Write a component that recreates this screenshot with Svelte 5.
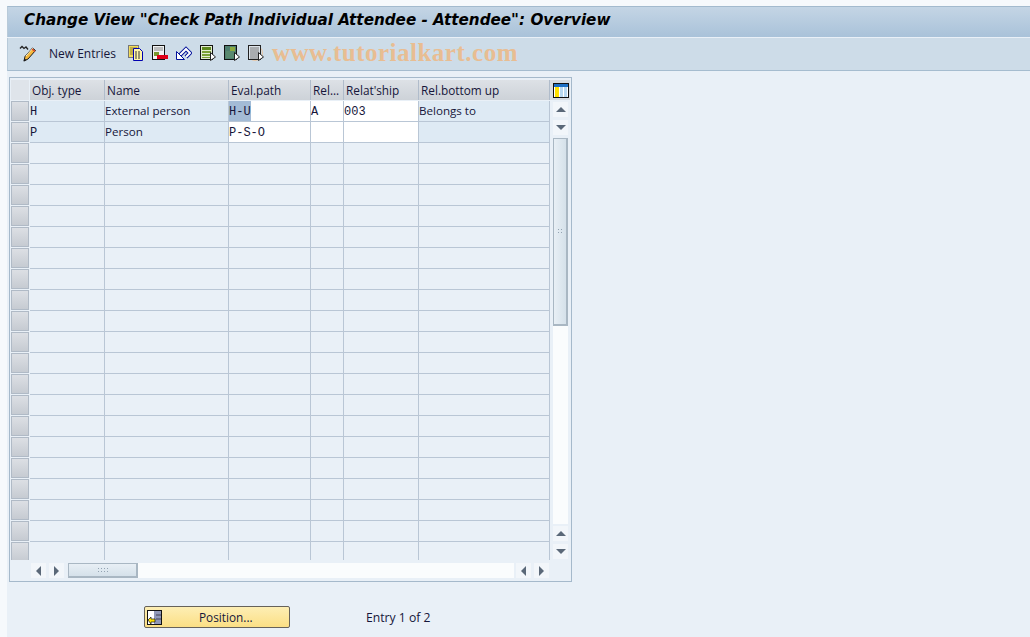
<script>
  const cols = [
    { name: 'Obj. type', w: 75 },
    { name: 'Name', w: 124 },
    { name: 'Eval.path', w: 82 },
    { name: 'Rel...', w: 33 },
    { name: "Relat'ship", w: 75 },
    { name: 'Rel.bottom up', w: 131 }
  ];
  const data = [
    [['H', 'mono'], ['External person', ''], ['H-U', 'mono input sel'], ['A', 'mono input'], ['003', 'mono input'], ['Belongs to', '']],
    [['P', 'mono'], ['Person', ''], ['P-S-O', 'mono input'], ['', 'input'], ['', 'input'], ['', '']]
  ];
  const empty = Array.from({ length: 20 }, () => 0);
</script>

<div class="page">
  <div class="shell">
    <header class="title">Change View "Check Path Individual Attendee - Attendee": Overview</header>
    <nav class="toolbar">
      <svg class="pen" width="18" height="17" viewBox="0 0 18 17">
        <path d="M1 3.500l2-2 2 2 2-1.500 2 2.500" fill="none" stroke="#222" stroke-width="1.300"/>
        <path d="M6 11.500L13.500 3l3 2.500L9 14l-4 2z" fill="#f5b83c" stroke="#1a1a1a"/>
        <path d="M7 11l7-8" stroke="#fff3c0"/>
        <path d="M13 4l3 2.500" stroke="#d8452a" stroke-width="1.500"/>
        <path d="M4.500 16.500l1-3 2 1.500z" fill="#1a1a1a"/>
      </svg>
      <span class="newent">New Entries</span>
      <div class="icons">
        <svg width="16" height="16" viewBox="0 0 16 16">
          <rect x="0.500" y="0.500" width="10" height="12" fill="#f3dc5c" stroke="#777"/>
          <path d="M2 3h7M2 5h7M2 7h7M2 9h7" stroke="#8a7f30"/>
          <path d="M5.500 3.500h6l3 3v9h-9z" fill="#fff6a8" stroke="#0000b0"/>
          <path d="M7 7h6M7 9h6M7 11h6M7 13h6" stroke="#333" stroke-dasharray="2 1"/>
        </svg>
        <svg width="16" height="16" viewBox="0 0 16 16">
          <rect x="0.500" y="0.500" width="12" height="14" fill="#f2f4f4" stroke="#111"/>
          <path d="M2 3h9M2 5h9" stroke="#8a8a8a"/>
          <rect x="2" y="7" width="5" height="4" fill="#7a9a30"/>
          <rect x="5" y="10" width="11" height="4" fill="#e00018"/>
        </svg>
        <svg width="16" height="16" viewBox="0 0 16 16">
          <path d="M4 10l6-6 4 4-4 4" fill="none" stroke="#00109a" stroke-width="4"/>
          <path d="M4 10l6-6 4 4-4 4" fill="none" stroke="#fff" stroke-width="2"/>
          <path d="M0.500 6.500v8h8z" fill="#fff" stroke="#00109a"/>
        </svg>
        <svg width="16" height="16" viewBox="0 0 16 16">
          <rect x="0.500" y="0.500" width="12" height="14" fill="#e4ecd0" stroke="#111"/>
          <rect x="2" y="2" width="9" height="3" fill="#5f8a20"/>
          <rect x="2" y="6" width="9" height="2" fill="#7ba034"/>
          <rect x="2" y="9" width="9" height="2" fill="#7ba034"/>
          <rect x="2" y="12" width="9" height="1" fill="#7ba034"/>
          <path d="M10.500 7.500l5 4.500-5 3.500z" fill="#fff" stroke="#222"/>
        </svg>
        <svg width="16" height="16" viewBox="0 0 16 16">
          <rect x="0.500" y="0.500" width="12" height="14" fill="#4f7f6f" stroke="#111"/>
          <rect x="6" y="2" width="5" height="4" fill="#8aaa40"/>
          <rect x="2" y="6" width="9" height="7" fill="#5a8a70"/>
          <path d="M10.500 7.500l5 4.500-5 3.500z" fill="#fff" stroke="#222"/>
        </svg>
        <svg width="16" height="16" viewBox="0 0 16 16">
          <circle cx="7" cy="8" r="7.500" fill="none" stroke="#e8c8a8"/>
          <rect x="0.500" y="0.500" width="12" height="14" fill="#dde4ea" stroke="#222"/>
          <path d="M2 3h9M2 5h9M2 7h9M2 9h9M2 11h9M2 13h9" stroke="#777"/>
          <path d="M10.500 7.500l5 4.500-5 3.500z" fill="#fff" stroke="#222"/>
        </svg>
      </div>
      <span class="mark">www.tutorialkart.com</span>
    </nav>

    <section class="frame">
      <div class="upper">
        <div class="tablewrap">
          <div class="hrow">
            <div class="corner"></div>
            {#each cols as c}
              <div class="hcell" style="width:{c.w}px">{c.name}</div>
            {/each}
          </div>
          {#each data as row}
            <div class="row">
              <div class="rh"><span></span></div>
              {#each row as cell, i}
                <div class="cell {cell[1]}" style="width:{cols[i].w}px">
                  {#if cell[1].includes('sel')}<span class="hl">{cell[0]}</span>{:else}{cell[0]}{/if}
                </div>
              {/each}
            </div>
          {/each}
          {#each empty as _}
            <div class="row">
              <div class="rh"><span></span></div>
              {#each cols as c}
                <div class="cell" style="width:{c.w}px"></div>
              {/each}
            </div>
          {/each}
        </div>
        <aside class="vside">
          <div class="config">
            <svg width="16" height="15" viewBox="0 0 16 15">
              <rect x="0.500" y="0.500" width="15" height="14" fill="#fff" stroke="#111"/>
              <rect x="1" y="1" width="14" height="3" fill="#1c6fc4"/>
              <rect x="2" y="4" width="4" height="10" fill="#ffe000"/>
              <rect x="7" y="4" width="3" height="10" fill="#b8d8f0"/>
              <rect x="11" y="4" width="3" height="10" fill="#b8d8f0"/>
            </svg>
          </div>
          <div class="sbtn first"><i class="up"></i></div>
          <div class="sbtn second"><i class="down"></i></div>
          <div class="vtrack">
            <div class="vthumb"><b></b></div>
          </div>
          <div class="sbtn"><i class="up"></i></div>
          <div class="sbtn second"><i class="down"></i></div>
        </aside>
      </div>
      <div class="hscroll">
        <div class="sbtn h"><i class="left"></i></div>
        <div class="sbtn h"><i class="right"></i></div>
        <div class="htrack"><div class="hthumb"><b></b></div></div>
        <div class="sbtn h"><i class="left"></i></div>
        <div class="sbtn h"><i class="right"></i></div>
      </div>
    </section>

    <footer class="foot">
      <button class="pos">
        <svg width="16" height="15" viewBox="0 0 16 15">
          <rect x="0.500" y="0.500" width="14" height="14" fill="#8f97b8" stroke="#111"/>
          <rect x="1" y="1" width="6" height="13" fill="#fff"/>
          <path d="M9 5h5M9 9h5" stroke="#445"/>
          <path d="M1 10l3-3v2h4v3H4v2z" fill="#ffe000" stroke="#111" stroke-width=".7"/>
        </svg>
        <span>Position...</span>
      </button>
      <span class="entry">Entry 1 of 2</span>
    </footer>
  </div>
</div>

<style>
  :global(body) { margin: 0; background: #f6f9fc; }
  .page {
    width: 1030px; height: 637px; box-sizing: border-box;
    padding: 6px 0 0 7px; overflow: hidden;
    font-family: "Open Sans", sans-serif; font-size: 12px; color: #16163a;
    display: flex; flex-direction: column;
  }
  .shell { flex: 1; display: flex; flex-direction: column; background: #e9f0f7; }
  .title {
    height: 31px; box-sizing: border-box; padding-left: 16px;
    background: linear-gradient(#c4d5e5, #a9c2d9);
    border-top: 1px solid #a3bace; border-left: 1px solid #b8cad9;
    font: italic bold 15.200px/27px "DejaVu Sans", sans-serif; color: #000;
    white-space: nowrap;
  }
  .toolbar {
    height: 33px; box-sizing: border-box; display: flex; align-items: center;
    padding: 0 0 2px 11px; margin-top: 1px;
    background: #cddce8; border-bottom: 1px solid #a5bccf; border-left: 1px solid #b8cad9;
  }
  .newent { margin-left: 12px; font-size: 12px; }
  .icons { display: flex; gap: 8px; margin-left: 12px; }
  .mark {
    margin-left: 8px; font: bold 25px "Liberation Serif", serif;
    color: #e8bd92; white-space: nowrap; letter-spacing: .5px;
  }
  .frame {
    margin: 6px 0 0 2px; width: 563px; height: 505px; box-sizing: border-box;
    border: 1px solid #a5b9cb; background: #e9f0f7;
    display: flex; flex-direction: column; padding: 1px 1px 0 1px;
  }
  .upper { display: flex; height: 481px; overflow: hidden; }
  .tablewrap { width: 539px; flex: none; overflow: hidden; }
  .hrow { display: flex; height: 21px; margin-top: 1px; }
  .corner { width: 19px; flex: none; box-sizing: border-box; background: #dfe4ea; border-right: 1px solid #e9f0f7; height: 20px; }
  .hcell {
    box-sizing: border-box; height: 20px; padding-left: 2px; line-height: 21px;
    background: linear-gradient(#dde1e6, #cdd2d8); border-right: 1px solid #b0bccb;
    font-size: 11.800px; white-space: nowrap; overflow: hidden;
  }
  .row { display: flex; height: 21px; }
  .rh { width: 19px; flex: none; box-sizing: border-box; padding-bottom: 1px; }
  .rh span {
    display: block; width: 18px; height: 20px; box-sizing: border-box;
    background: linear-gradient(#dcdfe4, #c6cbd2); border: 1px solid #b0bac6;
  }
  .cell {
    box-sizing: border-box; height: 21px; line-height: 20px; padding-left: 0;
    border-right: 1px solid #b9c6d5; border-bottom: 1px solid #b9c6d5;
    font-size: 11.600px; white-space: nowrap;
  }
  .row:nth-child(2) .cell:not(.input), .row:nth-child(3) .cell:not(.input) { background: #deeaf4; }
  .cell.input { background: #fff; }
  .cell.mono { font: 12px/22px "Liberation Mono", monospace; padding-left: 0; }
  .hl { background: #a3bbd6; display: inline-block; height: 20px; line-height: 22px; }
  .vside { width: 21px; flex: none; display: flex; flex-direction: column; align-items: center; padding-bottom: 1px; box-sizing: border-box; }
  .config {
    width: 21px; height: 20px; margin-top: 1px; flex: none; box-sizing: border-box; display: flex; align-items: center; justify-content: center;
    background: #d6dbe0;
  }
  .sbtn {
    width: 15px; height: 15px; margin-top: 2px; flex: none; background: #f2f6fa; display: flex; align-items: center; justify-content: center;
  }
  .sbtn.second { margin-top: 3px; }
  .sbtn.h { margin: 0 3px 0 0; }
  i { display: block; width: 0; height: 0; border-style: solid; border-color: transparent; }
  .up { border-width: 0 5px 5px; border-bottom-color: #5a6878; }
  .down { border-width: 5px 5px 0; border-top-color: #5a6878; }
  .left { border-width: 5px 5px 5px 0; border-right-color: #5a6878; }
  .right { border-width: 5px 0 5px 5px; border-left-color: #5a6878; }
  .vtrack { flex: 1; width: 15px; margin-top: 3px; background: #fafcfd; }
  .vthumb {
    width: 15px; height: 188px; box-sizing: border-box; display: flex; align-items: center; justify-content: center;
    background: linear-gradient(90deg, #e8eff5, #d5e1ea); border: 1px solid #a9b7c3; border-right-width: 2px; border-bottom-width: 2px;
  }
  .vthumb b { width: 7px; height: 7px; background: radial-gradient(circle, #93a3b2 1px, transparent 1px) 0 0/3px 3px; }
  .hscroll { display: flex; height: 15px; padding: 3px 0 0 20px; box-sizing: content-box; }
  .htrack { width: 446px; height: 15px; margin: 0 2px 0 1px; background: #fafcfd; }
  .hthumb {
    width: 70px; height: 15px; box-sizing: border-box; display: flex; align-items: center; justify-content: center;
    background: linear-gradient(#e8eff5, #d5e1ea); border: 1px solid #a9b7c3; border-right-width: 2px; border-bottom-width: 2px;
  }
  .hthumb b { width: 12px; height: 7px; background: radial-gradient(circle, #93a3b2 1px, transparent 1px) 0 0/3px 3px; }
  .foot { display: flex; align-items: center; margin-top: 24px; padding-left: 137px; height: 22px; }
  .pos {
    width: 146px; height: 22px; padding: 0 0 0 2px; box-sizing: border-box; display: flex; align-items: center;
    background: linear-gradient(#fdeeb4, #fbdf85); border: 1px solid #66625a; border-radius: 2px;
    font: 11.800px "Open Sans", sans-serif; color: #16163a;
  }
  .pos span { margin-left: 36px; }
  .entry { margin-left: 76px; font-size: 12.200px; }
</style>
